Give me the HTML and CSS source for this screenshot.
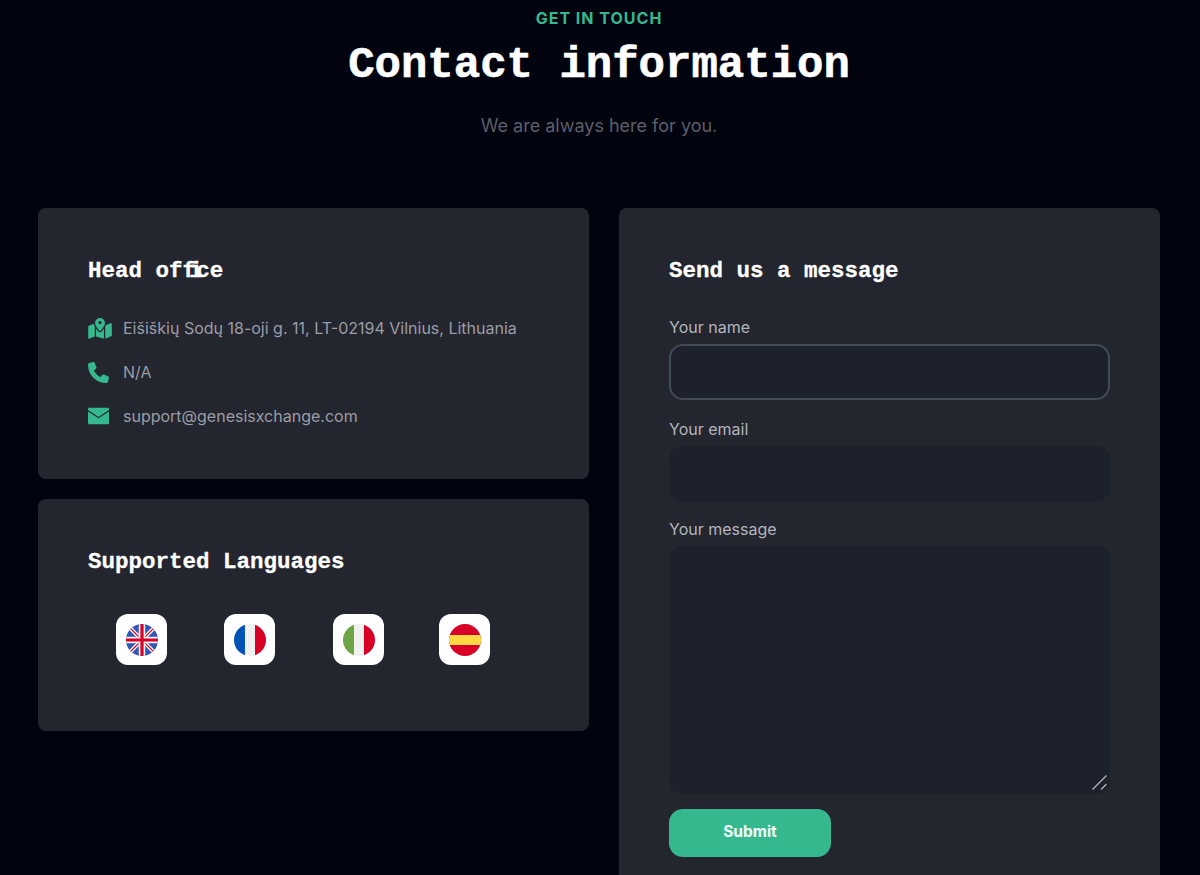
FILE: index.html
```html
<!DOCTYPE html>
<html lang="en">
<head>
  <meta charset="UTF-8">
  <meta name="viewport" content="width=device-width, initial-scale=1.0">
  <title>Contact information</title>
  <link rel="stylesheet" href="styles.css">
</head>
<body>
  <div class="page">
    <header class="intro">
      <div class="eyebrow">GET IN TOUCH</div>
      <h1>Contact information</h1>
      <p class="lead">We are always here for you.</p>
    </header>

    <div class="contact-grid">
      <div class="left-col">
        <section class="card office">
          <h3>Head of<span class="lig">fi</span>ce</h3>
          <ul class="info-list">
            <li>
              <svg class="info-icon map" viewBox="0 0 576 512"><path d="M408 120c0 54.6-73.1 151.9-105.2 192c-7.7 9.6-22 9.6-29.6 0C241.1 271.9 168 174.6 168 120C168 53.7 221.7 0 288 0s120 53.7 120 120zm8 80.4c3.5-6.9 6.7-13.8 9.6-20.6c.5-1.2 1-2.5 1.5-3.7l116-46.4C558.9 123.4 576 135 576 152V422.8c0 9.8-6 18.6-15.1 22.3L416 503V200.4zM137.6 138.3c2.4 14.1 7.2 28.3 12.8 41.5c2.9 6.8 6.1 13.7 9.6 20.6V451.8L32.9 502.7C17.1 509 0 497.4 0 480.4V209.6c0-9.8 6-18.6 15.1-22.3l122.6-49zM327.8 332c13.9-17.4 35.7-45.7 56.2-77V504.3L192 449.4V255c20.5 31.3 42.3 59.6 56.2 77c20.5 25.6 59.1 25.6 79.6 0zM288 152a40 40 0 1 0 0-80 40 40 0 1 0 0 80z"/></svg>
              <span>Eišiškių Sodų 18-oji g. 11, LT-02194 Vilnius, Lithuania</span>
            </li>
            <li>
              <svg class="info-icon" viewBox="0 0 512 512"><path d="M164.9 24.6c-7.7-18.6-28-28.5-47.4-23.2l-88 24C12.1 30.2 0 46 0 64C0 311.4 200.6 512 448 512c18 0 33.8-12.1 38.6-29.5l24-88c5.3-19.4-4.6-39.7-23.2-47.4l-96-40c-16.3-6.8-35.2-2.1-46.3 11.6L304.7 368C234.3 334.7 177.3 277.7 144 207.3L193.3 167c13.7-11.2 18.4-30 11.6-46.3l-40-96z"/></svg>
              <span>N/A</span>
            </li>
            <li>
              <svg class="info-icon mail" viewBox="0 0 512 400"><path d="M32 0H480c17.7 0 32 14.300 32 32V54L256 222L0 54V32C0 14.300 14.300 0 32 0zM0 88L256 256L512 88V368c0 17.700-14.300 32-32 32H32C14.300 400 0 385.700 0 368V88z"/></svg>
              <span>support@genesisxchange.com</span>
            </li>
          </ul>
        </section>

        <section class="card languages">
          <h3>Supported Languages</h3>
          <div class="flags">
            <div class="flag-tile">
              <svg class="flag" viewBox="0 0 32 32">
                <defs><clipPath id="round"><circle cx="16" cy="16" r="16"/></clipPath></defs>
                <g clip-path="url(#round)">
                  <rect width="32" height="32" fill="#2f56b8"/>
                  <path d="M0 0L32 32M32 0L0 32" stroke="#f0f0f0" stroke-width="4"/>
                  <path d="M0 0L32 32M32 0L0 32" stroke="#d80027" stroke-width="1.200"/>
                  <path d="M16 0V32M0 16H32" stroke="#f0f0f0" stroke-width="6.500"/>
                  <path d="M16 0V32M0 16H32" stroke="#d80027" stroke-width="3.200"/>
                </g>
              </svg>
            </div>
            <div class="flag-tile">
              <svg class="flag" viewBox="0 0 32 32">
                <g clip-path="url(#round)">
                  <rect width="11" height="32" fill="#0052b4"/>
                  <rect x="11" width="10" height="32" fill="#f0f0f0"/>
                  <rect x="21" width="11" height="32" fill="#d80027"/>
                </g>
              </svg>
            </div>
            <div class="flag-tile">
              <svg class="flag" viewBox="0 0 32 32">
                <g clip-path="url(#round)">
                  <rect width="11" height="32" fill="#6da544"/>
                  <rect x="11" width="10" height="32" fill="#f0f0f0"/>
                  <rect x="21" width="11" height="32" fill="#d80027"/>
                </g>
              </svg>
            </div>
            <div class="flag-tile">
              <svg class="flag" viewBox="0 0 32 32">
                <g clip-path="url(#round)">
                  <rect width="32" height="32" fill="#d80027"/>
                  <rect y="11" width="32" height="10" fill="#ffda44"/>
                </g>
              </svg>
            </div>
          </div>
        </section>
      </div>

      <section class="card message">
        <h3>Send us a message</h3>
        <form class="contact-form" onsubmit="return false;">
          <label for="name">Your name</label>
          <input id="name" class="focused" type="text">
          <label for="email">Your email</label>
          <input id="email" type="email">
          <label for="msg">Your message</label>
          <div class="textarea-wrap">
            <textarea id="msg"></textarea>
            <svg class="grip" viewBox="0 0 15 15"><path d="M0.500 14.500L14.500 0.500M9 14.500L14.500 9"/></svg>
          </div>
          <button type="submit">Submit</button>
        </form>
      </section>
    </div>
  </div>
</body>
</html>
```

FILE: styles.css
```css
:root {
  --bg: #01040f;
  --card: #23252f;
  --field: #1c212b;
  --green: #35b88e;
}
html, body { margin: 0; padding: 0; background: var(--bg); }
body { font-family: Inter, Arial, sans-serif; color: #fff; }
.page { height: 875px; overflow: hidden; padding: 0 40px 0 38px; box-sizing: border-box; }

/* Heading block */
.intro { text-align: center; padding-top: 9px; margin-bottom: 70px; }
.eyebrow { font-size: 16px; line-height: 18px; font-weight: 700; letter-spacing: 1px; color: var(--green); }
h1 {
  font-family: "Liberation Mono", "DejaVu Sans Mono", monospace;
  font-size: 44px; line-height: 54px; font-weight: 700;
  -webkit-text-stroke: 0.6px #fff;
  margin: 11px 0 0;
}
.lead { font-size: 18px; line-height: 24px; color: #5c5e68; margin: 22px 0 0; }

/* Cards */
.contact-grid { display: grid; grid-template-columns: 551px 541px; gap: 30px; align-items: start; }
.left-col { display: flex; flex-direction: column; gap: 20px; }
.card { background: var(--card); border-radius: 8px; padding: 51px 50px 50px; box-sizing: border-box; }
h3 {
  font-family: "Liberation Mono", "DejaVu Sans Mono", monospace;
  font-size: 22.500px; line-height: 24px; font-weight: 700;
  -webkit-text-stroke: 0.3px #fff;
  margin: 0;
}
.lig { letter-spacing: -6.700px; }
.office { height: 271px; }
.languages { height: 232px; }
.message { height: 700px; }

.info-list { list-style: none; margin: 23px 0 0; padding: 0; }
.info-list li { display: grid; grid-template-columns: 35px 1fr; align-items: center; height: 44px; font-size: 16px; color: #9b9da6; }
.info-icon { width: 21px; height: 21px; fill: var(--green); }
.info-icon.map { width: 24px; }
.info-icon.mail { height: 18px; }

.flags { display: grid; grid-template-columns: 108px 109px 106px 107px; margin-top: 40px; }
.flag-tile {
  width: 51px; height: 51px; margin-left: 28px;
  background: #fff; border-radius: 12px;
  display: flex; align-items: center; justify-content: center;
}
.flag { width: 32px; height: 32px; }

/* Form */
.contact-form { margin-top: 34px; }
.contact-form label { display: block; font-size: 16px; line-height: 20px; color: #b3b5be; }
input, textarea {
  display: block; width: 100%; box-sizing: border-box;
  background: var(--field); color: #fff;
  border: 2px solid var(--field); border-radius: 14px;
  margin: 7px 0 18px; outline: none; font-family: inherit;
}
input { height: 55px; }
input.focused { height: 56px; margin-bottom: 19px; border-color: #434a57; }
.textarea-wrap { position: relative; margin-bottom: 15px; }
textarea { height: 248px; margin-bottom: 0; resize: none; }
.grip { position: absolute; right: 3px; bottom: 4px; width: 15px; height: 15px; fill: none; stroke: #b8bac0; stroke-width: 1.200; }
button {
  display: block; width: 162px; height: 48px; padding: 0 0 3px;
  background: var(--green); color: #f2fffa;
  border: none; border-radius: 14px;
  font-family: inherit; font-size: 15.500px; font-weight: 700;
}
```
